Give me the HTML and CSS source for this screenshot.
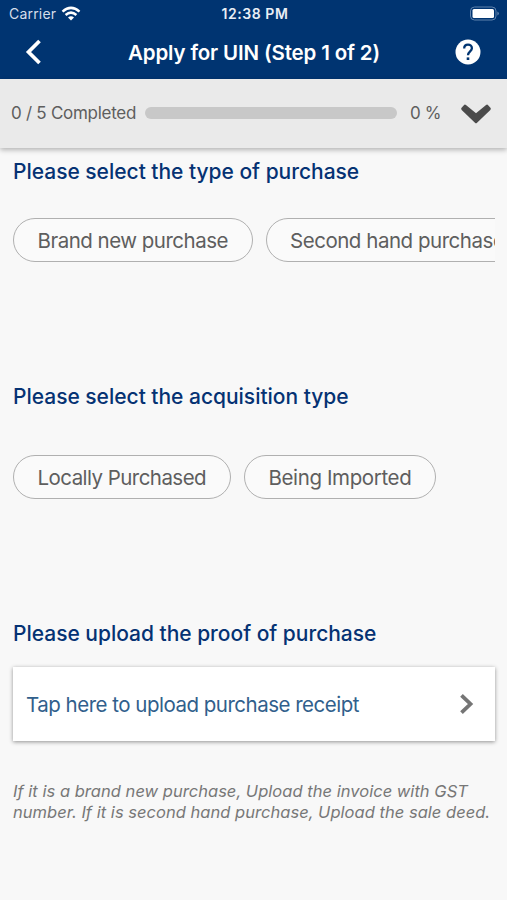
FILE: index.html
```html
<!DOCTYPE html>
<html lang="en">
<head>
<meta charset="utf-8">
<meta name="viewport" content="width=device-width, initial-scale=1">
<title>Apply for UIN</title>
<link rel="stylesheet" href="styles.css">
</head>
<body>
<header class="header">
  <div class="status">
    <div class="network">
      <span class="carrier">Carrier</span>
      <svg class="wifi" width="20" height="16" viewBox="0 0 20 16" fill="none" stroke="currentColor" stroke-width="2.5">
        <path d="M1.500 5.600Q10 -1.800 18.500 5.600"/>
        <path d="M4.600 9Q10 4.200 15.400 9"/>
        <path d="M7 11.500Q10 8.800 13 11.500L10 14.500Z" fill="currentColor" stroke="none"/>
      </svg>
    </div>
    <span class="clock">12:38 PM</span>
    <svg class="battery" width="32" height="16" viewBox="0 0 32 16">
      <rect x="1.500" y="1" width="25.500" height="13" rx="4" fill="none" stroke="#5f82ad"/>
      <rect x="3.500" y="3" width="21.500" height="9" rx="1.500" fill="#fff"/>
      <path d="M28.500 5.500Q31 7.500 28.500 9.500Z" fill="#7f9bc0"/>
    </svg>
  </div>
  <nav class="nav">
    <svg class="back" width="20" height="28" viewBox="0 0 20 28" fill="none" stroke="currentColor" stroke-width="3.700">
      <path d="M16.500 3L5.500 14L16.500 25"/>
    </svg>
    <h1 class="title">Apply for UIN (Step 1 of 2)</h1>
    <svg class="help" width="26" height="26" viewBox="0 0 26 26">
      <circle cx="13" cy="13" r="12.500" fill="#fff"/>
      <path d="M9.200 9.500C9.200 7.200 10.800 5.700 13 5.700S16.900 7.200 16.900 9.300C16.900 12.200 13 12.500 13 16.200" fill="none" stroke="#003471" stroke-width="2.300"/>
      <rect x="11.700" y="18.400" width="2.600" height="2.600" fill="#003471"/>
    </svg>
  </nav>
</header>
<section class="progress">
  <span class="count">0 / 5 Completed</span>
  <div class="track"></div>
  <span class="percent">0 %</span>
  <svg class="expand" width="32" height="22" viewBox="0 0 32 22" fill="#4b4b4b" stroke="#4b4b4b" stroke-width="3" stroke-linejoin="round">
    <path d="M5 4.200L16 13.200L27 4.200L29.300 6.800L16 19.600L2.700 6.800Z"/>
  </svg>
</section>
<main class="form">
  <section class="question first">
    <h2 class="heading">Please select the type of purchase</h2>
    <div class="chips">
      <button class="chip chip-new">Brand new purchase</button>
      <button class="chip chip-second">Second hand purchase</button>
    </div>
  </section>
  <section class="question second">
    <h2 class="heading">Please select the acquisition type</h2>
    <div class="chips">
      <button class="chip chip-local">Locally Purchased</button>
      <button class="chip chip-import">Being Imported</button>
    </div>
  </section>
  <section class="upload">
    <h2 class="heading">Please upload the proof of purchase</h2>
    <button class="card">
      <span class="card-label">Tap here to upload purchase receipt</span>
      <svg width="16" height="22" viewBox="0 0 16 22" fill="none" stroke="#757575" stroke-width="3.800">
        <path d="M2.500 2.300L11.500 11L2.500 19.700"/>
      </svg>
    </button>
    <p class="note">If it is a brand new purchase, Upload the invoice with GST<br>number. If it is second hand purchase, Upload the sale deed.</p>
  </section>
</main>
</body>
</html>
```
FILE: styles.css
```css
* { box-sizing: border-box; }
body {
  margin: 0;
  min-height: 900px;
  background: #f8f8f8;
  color: #5e5e5e;
  font-family: Inter, "Liberation Sans", sans-serif;
  overflow: hidden;
}
svg { display: block; flex: none; }
h1, h2, p { margin: 0; }
button { font: inherit; color: inherit; margin: 0; }
span, h1, h2, button, p { white-space: nowrap; }

.header {
  height: 79px;
  background: #003471;
  color: #fff;
}
.status {
  height: 27px;
  display: grid;
  grid-template-columns: 1fr auto 1fr;
  align-items: center;
  padding: 0 6px 0 9px;
}
.network { display: flex; align-items: center; }
.carrier { width: 52px; font-size: 14px; letter-spacing: .2px; color: #d5deea; }
.clock { font-size: 14px; letter-spacing: .55px; font-weight: 600; color: #e9eef5; }
.battery { justify-self: end; }
.nav {
  height: 50px;
  display: grid;
  grid-template-columns: 104px 1fr 104px;
  align-items: center;
}
.back { margin-left: 23px; }
.title {
  padding: 1px 0 0 1px;
  font-size: 20.5px;
  letter-spacing: -.15px;
  line-height: 28px;
  font-weight: 600;
  text-align: center;
}
.help { justify-self: end; margin-right: 26px; }

.progress {
  height: 69px;
  display: flex;
  align-items: center;
  padding: 0 15px 2px 11px;
  background: #eaeaea;
  box-shadow: 0 2px 5px rgba(0, 0, 0, .28);
}
.count { width: 134px; font-size: 17px; letter-spacing: -.27px; }
.track { width: 252px; height: 12px; border-radius: 6px; background: #c8c8c8; }
.percent { margin-left: 13px; font-size: 17px; letter-spacing: -.4px; }
.expand { margin-left: auto; }

.form { padding: 0 12px 0 13px; }
.question.first { height: 225px; padding-top: 10px; }
.question.second { height: 237px; padding-top: 10px; }
.heading {
  font-size: 21px;
  letter-spacing: -.02px;
  line-height: 28px;
  font-weight: 500;
  color: #053273;
}
.chips { display: flex; gap: 13px; overflow: hidden; margin-top: 32px; }
.second .chips { margin-top: 44px; }
.chip {
  flex: none;
  height: 44px;
  padding: 1px 0 0 23.5px;
  border: 1px solid #b0b0b0;
  border-radius: 22px;
  background: #fafafa;
  font-size: 20.5px;
  letter-spacing: -.5px;
  text-align: left;
}
.chip-new { width: 239.5px; }
.chip-second { width: 264px; letter-spacing: -.47px; }
.chip-local { width: 218px; letter-spacing: -.55px; }
.chip-import { width: 192px; letter-spacing: -.38px; }

.upload { padding-top: 10px; }
.card {
  width: 100%;
  height: 74px;
  margin-top: 19px;
  padding: 0 20px 0 13px;
  display: flex;
  align-items: center;
  justify-content: space-between;
  border: 0;
  background: #fff;
  color: #315f8c;
  font-size: 20.5px;
  letter-spacing: -.5px;
  box-shadow: 0 1px 4px rgba(0, 0, 0, .42);
}
.note {
  margin-top: 40px;
  font-size: 16.5px;
  letter-spacing: .03px;
  line-height: 20.5px;
  font-style: italic;
  color: #777;
}
```
